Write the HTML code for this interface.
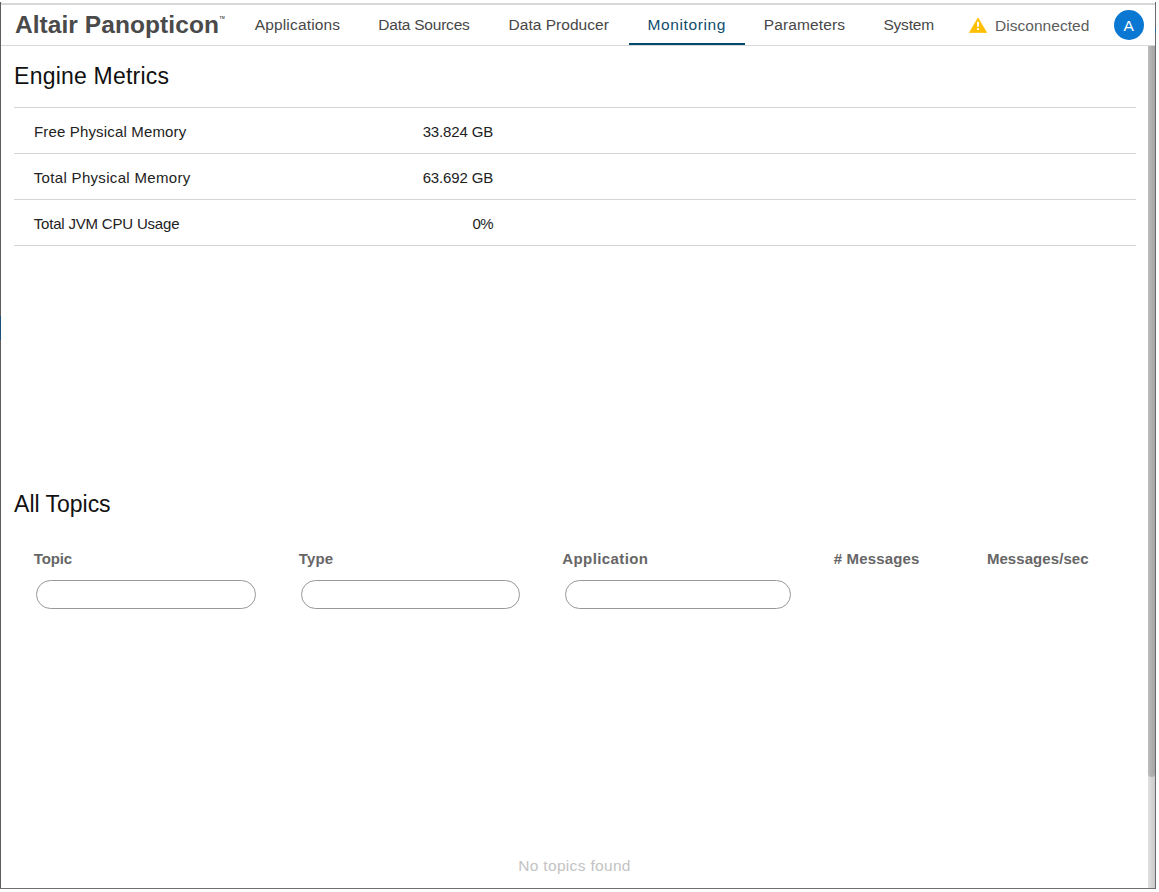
<!DOCTYPE html>
<html>
<head>
<meta charset="utf-8">
<title>Altair Panopticon - Monitoring</title>
<style>
html,body{margin:0;padding:0;}
body{width:1159px;height:892px;overflow:hidden;background:#fff;position:relative;font-family:"Liberation Sans",sans-serif;}
.a{position:absolute;}
.t{position:absolute;white-space:nowrap;line-height:1;}
.inp{position:absolute;top:580px;height:27px;border:1px solid #989898;border-radius:15px;}
.hl{position:absolute;left:14px;width:1122px;height:1px;background:#d5d5d5;}
</style>
</head>
<body>
<!-- frame -->
<div class="a" style="left:0;top:2px;width:1px;height:887px;background:#5e5e5e;"></div>
<div class="a" style="left:0;top:316px;width:1px;height:24px;background:#1f4e79;"></div>
<div class="a" style="left:1155px;top:2px;width:1px;height:887px;background:#6a6a6a;"></div>
<div class="a" style="left:1155px;top:28px;width:1px;height:5px;background:#2a6a96;"></div>
<div class="a" style="left:0;top:888px;width:1156px;height:1px;background:#707070;"></div>
<!-- header -->
<div class="a" style="left:1px;top:3px;width:1154px;height:2px;background:#d7d8da;"></div>
<div class="a" style="left:1px;top:45px;width:1154px;height:1px;background:#d6d9db;"></div>
<div class="a" style="left:629px;top:43px;width:116px;height:2px;background:#014a6c;"></div>
<div class="t" style="left:219.5px;top:17.2px;font-size:3.6px;font-weight:bold;color:#5a5a5a;">TM</div>
<svg class="a" style="left:964px;top:12px;" width="28" height="26" viewBox="0 0 28 26"><path fill="#ffbf00" stroke="#ffbf00" stroke-width="0.7" stroke-linejoin="round" d="M14 5.9 L22.6 20.5 L5.4 20.5 Z"/><rect x="13" y="9.8" width="2" height="4.9" fill="#fff"/><rect x="13" y="16.2" width="2" height="1.8" fill="#fff"/></svg>
<div class="a" style="left:1114px;top:10px;width:30px;height:30px;border-radius:50%;background:#0a78d2;"></div>
<!-- scrollbar -->
<div class="a" style="left:1148px;top:46px;width:7px;height:842px;background:linear-gradient(to right,#e1e1e1,#c9c9c9);"></div>
<div class="a" style="left:1148px;top:46px;width:7px;height:731px;border-radius:0 0 4px 4px;background:linear-gradient(to right,#bcbcbc,#a3a3a3);"></div>
<!-- engine metrics table lines -->
<div class="hl" style="top:107px;"></div>
<div class="hl" style="top:153px;"></div>
<div class="hl" style="top:199px;"></div>
<div class="hl" style="top:245px;"></div>
<!-- inputs -->
<div class="inp" style="left:36px;width:218px;"></div>
<div class="inp" style="left:301px;width:217px;"></div>
<div class="inp" style="left:565px;width:224px;"></div>
<!-- text -->
<div class="t" style="left:14.9px;top:13px;font-size:24.5px;font-weight:bold;color:#4a4a4a;letter-spacing:0.075px;">Altair Panopticon</div>
<div class="t" style="left:254.65px;top:17px;font-size:15.5px;font-weight:normal;color:#474747;letter-spacing:0.173px;">Applications</div>
<div class="t" style="left:378.3px;top:17px;font-size:15.5px;font-weight:normal;color:#474747;letter-spacing:-0.218px;">Data Sources</div>
<div class="t" style="left:508.5px;top:17px;font-size:15.5px;font-weight:normal;color:#474747;letter-spacing:0.033px;">Data Producer</div>
<div class="t" style="left:647.6px;top:17px;font-size:15.5px;font-weight:normal;color:#0d4c6c;letter-spacing:0.6px;">Monitoring</div>
<div class="t" style="left:763.8px;top:17px;font-size:15.5px;font-weight:normal;color:#474747;letter-spacing:0.111px;">Parameters</div>
<div class="t" style="left:883.4px;top:17px;font-size:15.5px;font-weight:normal;color:#474747;letter-spacing:-0.2px;">System</div>
<div class="t" style="left:994.95px;top:18px;font-size:15.5px;font-weight:normal;color:#5c5c5c;letter-spacing:0.045px;">Disconnected</div>
<div class="t" style="left:1123.4px;top:18px;font-size:15.5px;font-weight:normal;color:#fff;letter-spacing:0px;">A</div>
<div class="t" style="left:14.1px;top:65px;font-size:23px;font-weight:normal;color:#111;letter-spacing:0.215px;">Engine Metrics</div>
<div class="t" style="left:33.9px;top:124px;font-size:15px;font-weight:normal;color:#222;letter-spacing:0.168px;">Free Physical Memory</div>
<div class="t" style="left:33.75px;top:170px;font-size:15px;font-weight:normal;color:#222;letter-spacing:0.325px;">Total Physical Memory</div>
<div class="t" style="left:33.75px;top:216px;font-size:15px;font-weight:normal;color:#222;letter-spacing:-0.194px;">Total JVM CPU Usage</div>
<div class="t" style="left:422.65px;top:124px;font-size:15px;font-weight:normal;color:#222;letter-spacing:-0.137px;">33.824 GB</div>
<div class="t" style="left:422.65px;top:170px;font-size:15px;font-weight:normal;color:#222;letter-spacing:-0.137px;">63.692 GB</div>
<div class="t" style="left:472.45px;top:216px;font-size:15px;font-weight:normal;color:#222;letter-spacing:-0.6px;">0%</div>
<div class="t" style="left:14.1px;top:493px;font-size:23px;font-weight:normal;color:#111;letter-spacing:-0.022px;">All Topics</div>
<div class="t" style="left:33.85px;top:551px;font-size:15px;font-weight:bold;color:#666;letter-spacing:-0.175px;">Topic</div>
<div class="t" style="left:298.75px;top:551px;font-size:15px;font-weight:bold;color:#666;letter-spacing:0.167px;">Type</div>
<div class="t" style="left:562.3px;top:551px;font-size:15px;font-weight:bold;color:#666;letter-spacing:0.4px;">Application</div>
<div class="t" style="left:833.7px;top:551px;font-size:15px;font-weight:bold;color:#666;letter-spacing:0.156px;"># Messages</div>
<div class="t" style="left:986.9px;top:551px;font-size:15px;font-weight:bold;color:#666;letter-spacing:0.073px;">Messages/sec</div>
<div class="t" style="left:518.25px;top:858px;font-size:15.5px;font-weight:normal;color:#c3c3c3;letter-spacing:0.321px;">No topics found</div>
</body>
</html>
